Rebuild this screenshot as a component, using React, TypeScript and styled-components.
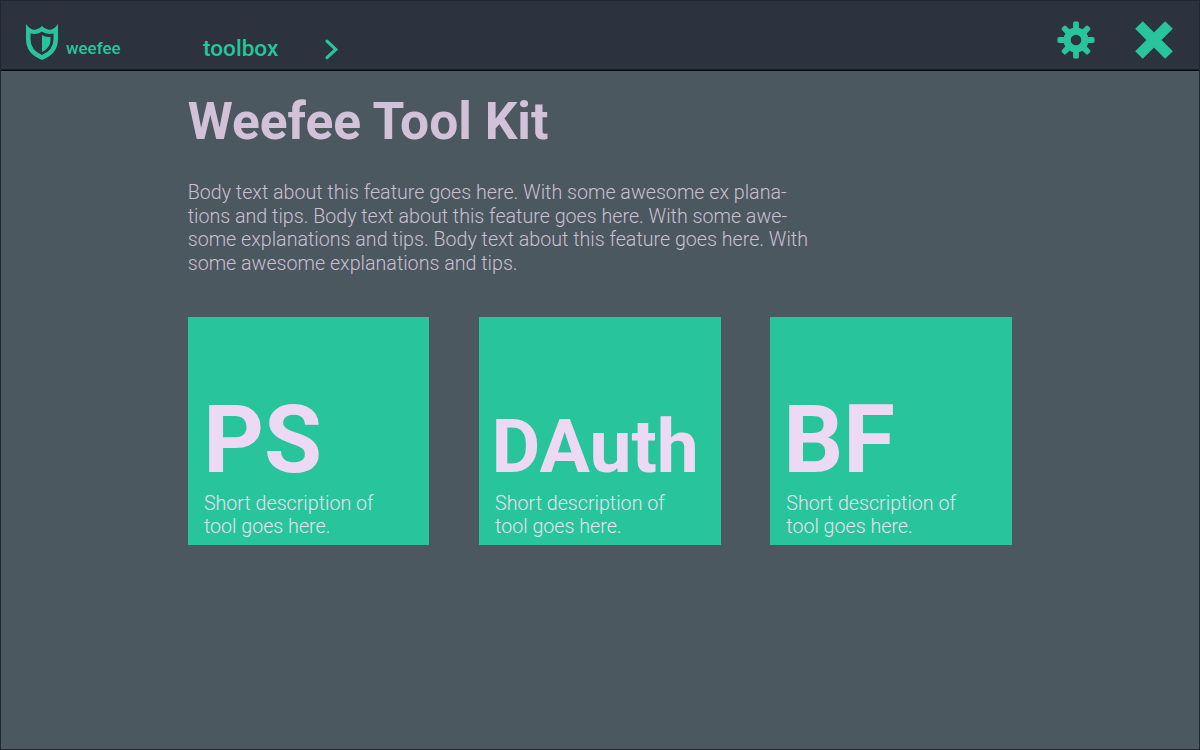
import React from "react";
import styled, { createGlobalStyle } from "styled-components";

const GlobalStyle = createGlobalStyle`
  *, *::before, *::after { box-sizing: border-box; }
  body { margin: 0; background: #4c5860; font-family: Roboto, "Liberation Sans", sans-serif; }
`;

const Window = styled.div`
  width: 1200px;
  height: 750px;
  display: flex;
  flex-direction: column;
  overflow: hidden;
  background: #4c5860;
  border: 1px solid #20282e;
`;

const TopBar = styled.header`
  flex: none;
  display: flex;
  align-items: flex-start;
  margin: -1px -1px 0;
  height: 71px;
  border: 1px solid #05070b;
  background: #2c323e;
  box-shadow: inset 0 -1px 0 #181c24;
  color: #28c49c;
`;

const Brand = styled.div`
  display: flex;
  width: 202px;
  padding: 22px 0 0 24px;
`;

const BrandName = styled.span`
  margin: 15px 0 0 7px;
  font-size: 16.9px;
  line-height: 21px;
  font-weight: 500;
`;

const Crumb = styled.nav`
  display: flex;
  flex: 1;
  padding-top: 34px;
  font-size: 22.6px;
  line-height: 28px;
  font-weight: 500;
`;

const CrumbName = styled.span`
  width: 121px;
`;

const Actions = styled.div`
  display: flex;
  gap: 38px;
  padding: 19px 25px 0 0;
`;

const IconButton = styled.button`
  display: block;
  padding: 0;
  border: 0;
  background: none;
  color: inherit;
  line-height: 0;
`;

const Content = styled.main`
  padding: 21px 0 0 186.7px;
`;

const Title = styled.h1`
  margin: 0;
  color: #d2c1d8;
  font-size: 51.5px;
  line-height: 60px;
  font-weight: 700;
  white-space: nowrap;
`;

const Copy = styled.p<{ $tone: string }>`
  margin: 0;
  color: ${(p) => p.$tone};
  font-size: 19.67px;
  line-height: 23.75px;
  font-weight: 300;
  white-space: pre;
`;

const Intro = styled(Copy)`
  margin-top: 28.8px;
`;

const Cards = styled.section`
  display: flex;
  gap: 49.5px;
  margin-top: 40.9px;
`;

const Card = styled.article`
  display: flex;
  flex-direction: column;
  justify-content: flex-end;
  width: 241.7px;
  height: 228.6px;
  padding: 0 0 6.1px 16.2px;
  background: #28c49c;
`;

const CardName = styled.h2<{ $size: number; $shift: number }>`
  margin: 0 0 calc(19.4px - 0.159em) ${(p) => p.$shift}px;
  color: #eed9f5;
  font-size: ${(p) => p.$size}px;
  line-height: 1;
  font-weight: 700;
  white-space: nowrap;
`;

const tools = [
  { name: "PS", size: 94.3, shift: -0.7 },
  { name: "DAuth", size: 75, shift: -3.6 },
  { name: "BF", size: 94, shift: -3 },
];

const Shield = () => (
  <svg width="34" height="38" viewBox="0 0 34 38" fill="currentColor">
    <path
      fillRule="evenodd"
      d="M1 1 Q6 8 11 6.5 Q15 5.500 17 3 Q19 5.500 23 6.500 Q28 8 33 1 V16 Q33 31 17 37 Q1 31 1 16 Z M5.500 10.500 V16 Q5.500 27 17 32 Q28.500 27 28.500 16 V10.500 Q21 12 17 8.500 Q13 12 5.500 10.500 Z"
    />
    <path d="M17 12 Q20 14.500 25.500 14 V17 Q25.500 24.500 17 29 Z" />
  </svg>
);

const Chevron = () => (
  <svg width="16" height="28" viewBox="0 0 16 28" fill="none" stroke="currentColor" strokeWidth="3.2">
    <path d="M3 6.200 L11.800 14.400 L3 22.600" strokeLinecap="round" />
  </svg>
);

const Gear = () => (
  <svg width="40" height="40" viewBox="-20 -20 40 40" fill="currentColor">
    <circle r="8.900" fill="none" stroke="currentColor" strokeWidth="7.200" />
    {[0, 45, 90, 135, 180, 225, 270, 315].map((a) => (
      <rect key={a} x="-2.900" y="-18.500" width="5.800" height="9" rx="1.600" transform={`rotate(${a})`} />
    ))}
  </svg>
);

const Cross = () => (
  <svg width="40" height="40" viewBox="-20 -20 40 40" stroke="currentColor" strokeWidth="10.800">
    <path d="M-15 -15 L15 15 M15 -15 L-15 15" />
  </svg>
);

export default function App() {
  return (
    <Window>
      <GlobalStyle />
      <TopBar>
        <Brand>
          <Shield />
          <BrandName>weefee</BrandName>
        </Brand>
        <Crumb>
          <CrumbName>toolbox</CrumbName>
          <Chevron />
        </Crumb>
        <Actions>
          <IconButton aria-label="Settings"><Gear /></IconButton>
          <IconButton aria-label="Close"><Cross /></IconButton>
        </Actions>
      </TopBar>
      <Content>
        <Title>Weefee Tool Kit</Title>
        <Intro $tone="#cbbfd2">
          {"Body text about this feature goes here. With some awesome ex plana-\ntions and tips. Body text about this feature goes here. With some awe-\nsome explanations and tips. Body text about this feature goes here. With\nsome awesome explanations and tips."}
        </Intro>
        <Cards>
          {tools.map((t) => (
            <Card key={t.name}>
              <CardName $size={t.size} $shift={t.shift}>{t.name}</CardName>
              <Copy $tone="#e3e3ef">{"Short description of\ntool goes here."}</Copy>
            </Card>
          ))}
        </Cards>
      </Content>
    </Window>
  );
}
